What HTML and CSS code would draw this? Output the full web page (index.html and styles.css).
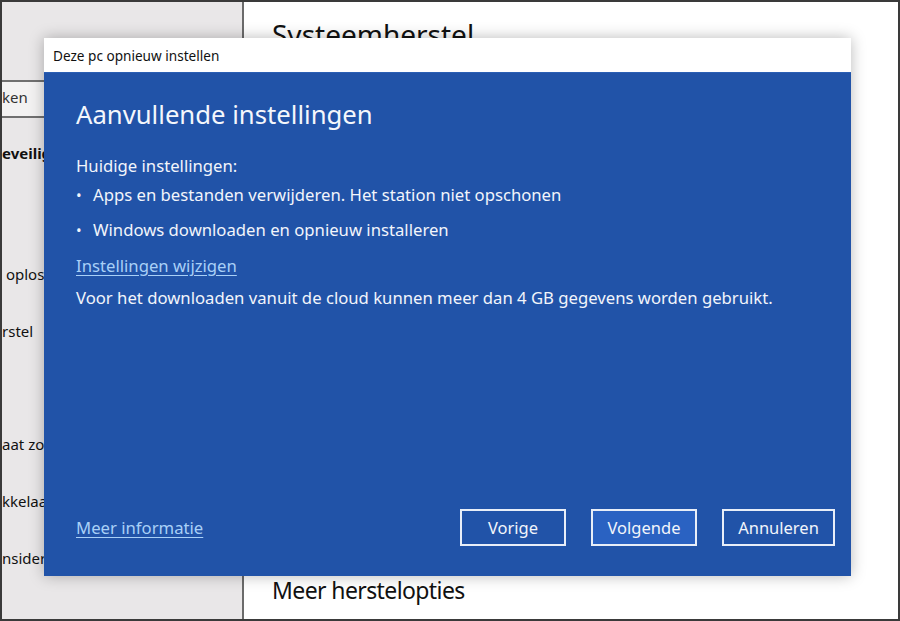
FILE: index.html
```html
<!DOCTYPE html>
<html lang="nl">
<head>
  <meta charset="UTF-8" />
  <meta name="viewport" content="width=device-width, initial-scale=1.0"/>
  <title>Deze pc opnieuw instellen</title>
  <link rel="stylesheet" href="styles.css">
</head>
<body>
  <div class="screen">
    <div class="sidebar">
      <div class="search">ken</div>
      <ul class="nav">
        <li class="nav-head">eveiliging</li>
        <li></li>
        <li>&nbsp;oplossen</li>
        <li>rstel</li>
        <li></li>
        <li>aat zoeken</li>
        <li>kkelaars</li>
        <li>nsider-programma</li>
      </ul>
    </div>
    <div class="main">
      <h2 class="page-title">Systeemherstel</h2>
      <div class="spacer"></div>
      <h3 class="section-title">Meer herstelopties</h3>
    </div>

    <div class="dialog">
      <div class="dialog-title">Deze pc opnieuw instellen</div>
      <div class="dialog-body">
        <h1>Aanvullende instellingen</h1>
        <p class="label">Huidige instellingen:</p>
        <ul class="bullets">
          <li>Apps en bestanden verwijderen. Het station niet opschonen</li>
          <li>Windows downloaden en opnieuw installeren</li>
        </ul>
        <a class="link" href="#">Instellingen wijzigen</a>
        <p class="note">Voor het downloaden vanuit de cloud kunnen meer dan 4 GB gegevens worden gebruikt.</p>
        <div class="dialog-footer">
          <a class="link" href="#">Meer informatie</a>
          <div class="buttons">
            <button class="btn">Vorige</button>
            <button class="btn primary">Volgende</button>
            <button class="btn">Annuleren</button>
          </div>
        </div>
      </div>
    </div>
  </div>
</body>
</html>
```

FILE: styles.css
```css
html, body { margin: 0; padding: 0; }
body { font-family: 'Noto Sans', 'Open Sans', sans-serif; color: #111; }

.screen { position: relative; width: 900px; height: 621px; box-sizing: border-box; border: 2px solid #3a3a3a;
          display: flex; overflow: hidden; background: #fff; }

.sidebar { width: 240px; background: #e9e7e8; border-right: 2px solid #6b6b6b; flex-shrink: 0; }
.search { margin-top: 78px; height: 34px; border-top: 2px solid #707070; border-bottom: 2px solid #707070;
          background: #f3f2f2; font-size: 15px; line-height: 30px; color: #333; white-space: nowrap; }
.nav { list-style: none; margin: 7px 0 0; padding: 0; }
.nav li { height: 56.8px; line-height: 56px; font-size: 15px; white-space: nowrap; }
.nav .nav-head { font-weight: bold; height: 64px; line-height: 56px; }

.main { flex: 1; padding-left: 28px; display: flex; flex-direction: column; }
.page-title { margin: 14px 0 0; font-weight: normal; font-size: 28px; line-height: 36px; }
.spacer { flex: 1; }
.section-title { margin: 0 0 14px; font-weight: normal; font-size: 23px; letter-spacing: -0.6px; line-height: 30px; }

.dialog { position: absolute; left: 42px; top: 36px; width: 807px; height: 538px; display: flex; flex-direction: column;
          box-shadow: 0 0 14px rgba(0,0,0,0.28); }
.dialog-title { height: 34px; background: #fff; font-size: 13.6px; line-height: 36px; padding-left: 9px; color: #111;
                border-bottom: 1px solid #2b5fb4; }
.dialog-body { flex: 1; background: #2153a8; color: #f2f5fb; padding: 0 16px 0 32px; display: flex; flex-direction: column; }
.dialog-body h1 { margin: 22px 0 0; font-weight: normal; font-size: 25.7px; line-height: 40px; color: #f4f7fc; }
.label { margin: 19px 0 0; font-size: 16.7px; line-height: 24px; }
.bullets { list-style: none; margin: 5px 0 0; padding: 0; }
.bullets li { font-size: 16.7px; line-height: 24px; margin-bottom: 11px; padding-left: 17px; position: relative; }
.bullets li::before { content: "\2022"; position: absolute; left: 0; font-size: 15px; }
.link { color: #a9d0f7; font-size: 16.7px; line-height: 24px; text-decoration: underline; text-underline-offset: 3px; }
.bullets + .link { margin-top: 1px; }
.note { margin: 8px 0 0; font-size: 16.7px; line-height: 24px; }

.dialog-footer { margin-top: auto; margin-bottom: 30px; display: flex; align-items: center; justify-content: space-between; }
.buttons { display: flex; gap: 25px; }
.btn { width: 106px; height: 37px; box-sizing: border-box; border: 2px solid #e8eef8; background: transparent; color: #f2f5fb;
       font-family: inherit; font-size: 16.5px; padding: 0; }
.btn.primary { background: #2a62c2; }
.btn:last-child { width: 113px; }
```
